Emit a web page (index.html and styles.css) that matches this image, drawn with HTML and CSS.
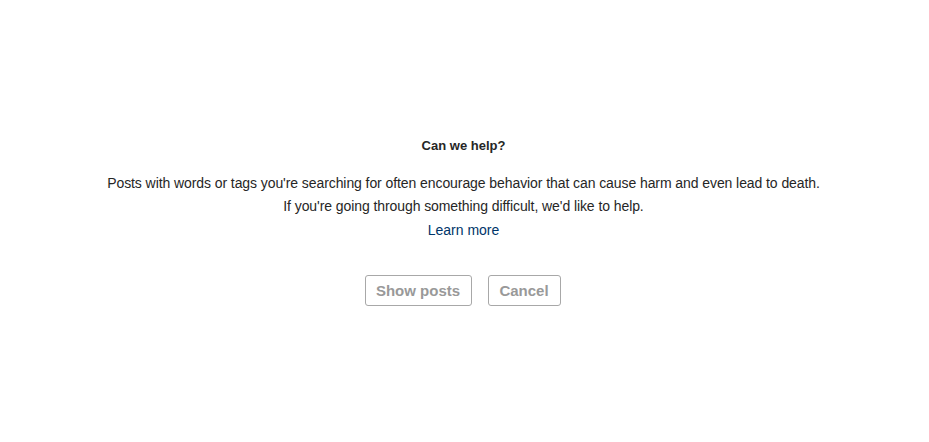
FILE: index.html
```html
<!DOCTYPE html>
<html>
<head>
<meta charset="utf-8">
<link rel="stylesheet" href="styles.css">
</head>
<body>
<div class="page">
  <div class="dialog">
    <h2 class="title">Can we help?</h2>
    <p class="line first">Posts with words or tags you're searching for often encourage behavior that can cause harm and even lead to death.</p>
    <p class="line">If you're going through something difficult, we'd like to help.</p>
    <a class="learn" href="#">Learn more</a>
    <div class="actions">
      <button class="btn show">Show posts</button>
      <button class="btn cancel">Cancel</button>
    </div>
  </div>
</div>
</body>
</html>
```

FILE: styles.css
```css
html, body {
  margin: 0;
  padding: 0;
  background: #fff;
}
body {
  font-family: "Liberation Sans", Arial, sans-serif;
  color: #262626;
  width: 929px;
  height: 442px;
  overflow: hidden;
}
.page {
  display: flex;
  justify-content: center;
  padding-top: 137px;
  padding-right: 2px;
}
.dialog {
  display: flex;
  flex-direction: column;
  align-items: center;
  text-align: center;
}
.title {
  margin: 0;
  font-size: 13px;
  font-weight: bold;
  line-height: 18px;
  color: #262626;
}
.line {
  margin: 0;
  font-size: 14px;
  letter-spacing: -0.08px;
  line-height: 23px;
  color: #262626;
}
.line.first {
  margin-top: 17px;
}
.learn {
  font-size: 14px;
  line-height: 23px;
  color: #003569;
  text-decoration: none;
  margin-top: 1px;
}
.actions {
  display: flex;
  gap: 16px;
  margin-top: 33px;
  margin-right: 2px;
}
.btn {
  box-sizing: border-box;
  font-family: "Liberation Sans", Arial, sans-serif;
  font-size: 15px;
  font-weight: bold;
  color: #999;
  background: #fff;
  border: 1px solid #a8a8a8;
  border-radius: 3px;
  height: 31px;
  padding: 0;
  line-height: 29px;
  white-space: nowrap;
}
.show { width: 107px; }
.cancel { width: 73px; }
```
